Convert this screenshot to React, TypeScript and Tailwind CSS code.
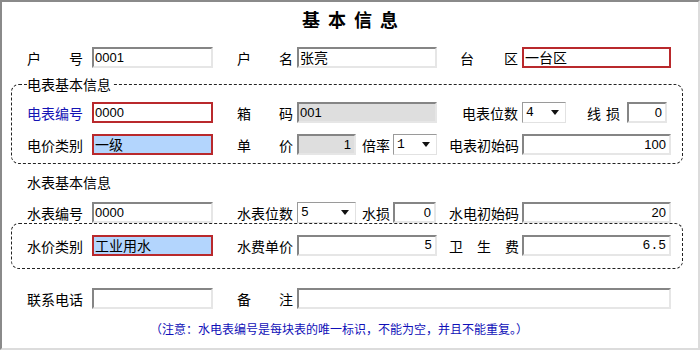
import type { ReactNode } from 'react';

const CJK = "font-['Noto_Sans_CJK_SC',sans-serif]";

type FieldVariant = 'normal' | 'red' | 'redBlue' | 'gray';

const VARIANT_CLASS: Record<FieldVariant, string> = {
  normal: 'border-2 border-t-[#858585] border-l-[#858585] border-b-[#e6e6e6] border-r-[#e6e6e6] bg-white',
  red: 'border-2 border-[#b9292c] bg-white',
  redBlue: 'border-2 border-[#b9292c] bg-[#b3d5fd]',
  gray: 'border-2 border-t-[#858585] border-l-[#858585] border-b-[#e6e6e6] border-r-[#e6e6e6] bg-[#dedede]',
};

function Label({ text, className = '', blue = false }: { text: string; className?: string; blue?: boolean }) {
  return (
    <div
      className={`flex shrink-0 justify-between text-[14px] leading-[20px] ${CJK} ${blue ? 'text-[#1414b4]' : 'text-black'} ${className}`}
    >
      {text.split('').map((ch, i) => (
        <span key={i}>{ch}</span>
      ))}
    </div>
  );
}

function Field({
  value = '',
  className = '',
  variant = 'normal',
  right = false,
  font = 'sans',
}: {
  value?: string;
  className?: string;
  variant?: FieldVariant;
  right?: boolean;
  font?: 'sans' | 'cjk' | 'mono';
}) {
  const fontClass =
    font === 'cjk'
      ? `${CJK} text-[14px]`
      : font === 'mono'
        ? "font-['Liberation_Mono',monospace] text-[13px]"
        : "font-['Liberation_Sans',sans-serif] text-[13px]";
  return (
    <div
      className={`flex h-full shrink-0 items-center overflow-hidden ${right ? 'justify-end pr-[3px]' : 'pl-[1px]'} ${VARIANT_CLASS[variant]} ${fontClass} text-black ${className}`}
    >
      {value}
    </div>
  );
}

function Select({ value, className = '' }: { value: string; className?: string }) {
  return (
    <div
      className={`flex h-full shrink-0 items-center justify-between border border-t-[#9a9a9a] border-l-[#9a9a9a] border-b-[#e2e2e2] border-r-[#e2e2e2] bg-white pl-[3px] pr-[6px] font-['Liberation_Mono',monospace] text-[13px] text-black ${className}`}
    >
      <span>{value}</span>
      <svg width="8" height="5" viewBox="0 0 8 5">
        <path d="M0 0h8L4 5z" fill="#111" />
      </svg>
    </div>
  );
}

function Row({ children, className = '' }: { children: ReactNode; className?: string }) {
  return <div className={`flex h-[21px] items-center ${className}`}>{children}</div>;
}

function GroupBox({ children, className = '', legend }: { children: ReactNode; className?: string; legend?: string }) {
  return (
    <div className={`relative ml-[9px] w-[672px] rounded-[8px] border border-dashed border-[#222] pl-[15px] ${className}`}>
      {legend && (
        <span className={`absolute -top-[11px] left-[15px] bg-white pr-[1px] text-[14px] leading-[20px] text-black ${CJK}`}>
          {legend}
        </span>
      )}
      {children}
    </div>
  );
}

export default function App() {
  return (
    <div className="h-[350px] w-[700px] border-2 border-t-[#8a8a8a] border-l-[#8a8a8a] border-b-[#dcdcdc] border-r-[#dcdcdc] bg-white">
      <div className={`flex h-[34px] items-center justify-center pl-[8px] text-[18px] font-semibold tracking-[8px] text-black ${CJK}`}>
        基本信息
      </div>

      <Row className="mt-[11px] pl-[25px]">
        <Label text="户号" className="w-[56px]" />
        <Field value="0001" className="ml-[9px] w-[121px]" />
        <Label text="户名" className="ml-[24px] w-[56px]" />
        <Field value="张亮" font="cjk" className="ml-[4px] w-[140px]" />
        <Label text="台区" className="ml-[23px] w-[58px]" />
        <Field value="一台区" font="cjk" variant="red" className="ml-[4px] w-[149px]" />
      </Row>

      <GroupBox legend="电表基本信息" className="mt-[16px] pt-[17px] pb-[8px]">
        <Row>
          <Label text="电表编号" blue className="w-[56px]" />
          <Field value="0000" variant="red" className="ml-[9px] w-[121px]" />
          <Label text="箱码" className="ml-[24px] w-[56px]" />
          <Field value="001" variant="gray" className="ml-[4px] w-[140px]" />
          <Label text="电表位数" className="ml-[25px] w-[56px]" />
          <Select value="4" className="ml-[4px] w-[44px]" />
          <Label text="线损" className="ml-[21px] w-[33px]" />
          <Field value="0" right className="ml-[7px] w-[40px]" />
        </Row>
        <Row className="mt-[11px]">
          <Label text="电价类别" className="w-[56px]" />
          <Field value="一级" font="cjk" variant="redBlue" className="ml-[9px] w-[121px]" />
          <Label text="单价" className="ml-[24px] w-[56px]" />
          <Field value="1" right variant="gray" className="ml-[4px] w-[59px]" />
          <Label text="倍率" className="ml-[6px] w-[28px]" />
          <Select value="1" className="ml-[3px] w-[44px]" />
          <Label text="电表初始码" className="ml-[12px] w-[70px]" />
          <Field value="100" right className="ml-[3px] w-[149px]" />
        </Row>
      </GroupBox>

      <div className={`mt-[8px] pl-[25px] text-[14px] leading-[20px] text-black ${CJK}`}>水表基本信息</div>

      <Row className="mt-[10px] h-[20px] pl-[25px]">
        <Label text="水表编号" className="w-[56px]" />
        <Field value="0000" className="ml-[9px] w-[121px]" />
        <Label text="水表位数" className="ml-[24px] w-[56px]" />
        <Select value="5" className="ml-[4px] w-[59px]" />
        <Label text="水损" className="ml-[6px] w-[28px]" />
        <Field value="0" right className="ml-[3px] w-[43px]" />
        <Label text="水电初始码" className="ml-[13px] w-[70px]" />
        <Field value="20" right className="ml-[3px] w-[149px]" />
      </Row>

      <GroupBox className="pt-[11px] pb-[12px]">
        <Row>
          <Label text="水价类别" className="w-[56px]" />
          <Field value="工业用水" font="cjk" variant="redBlue" className="ml-[9px] w-[121px]" />
          <Label text="水费单价" className="ml-[24px] w-[56px]" />
          <Field value="5" right font="mono" className="ml-[4px] w-[140px]" />
          <Label text="卫生费" className="ml-[12px] w-[70px]" />
          <Field value="6.5" right font="mono" className="ml-[3px] w-[149px]" />
        </Row>
      </GroupBox>

      <Row className="mt-[19px] pl-[25px]">
        <Label text="联系电话" className="w-[56px]" />
        <Field className="ml-[9px] w-[121px]" />
        <Label text="备注" className="ml-[24px] w-[56px]" />
        <Field className="ml-[4px] w-[374px]" />
      </Row>

      <div className={`mt-[12px] pl-[148px] text-[12px] leading-[16px] text-[#1010b8] ${CJK}`}>
        （注意：水电表编号是每块表的唯一标识，不能为空，并且不能重复。）
      </div>
    </div>
  );
}
